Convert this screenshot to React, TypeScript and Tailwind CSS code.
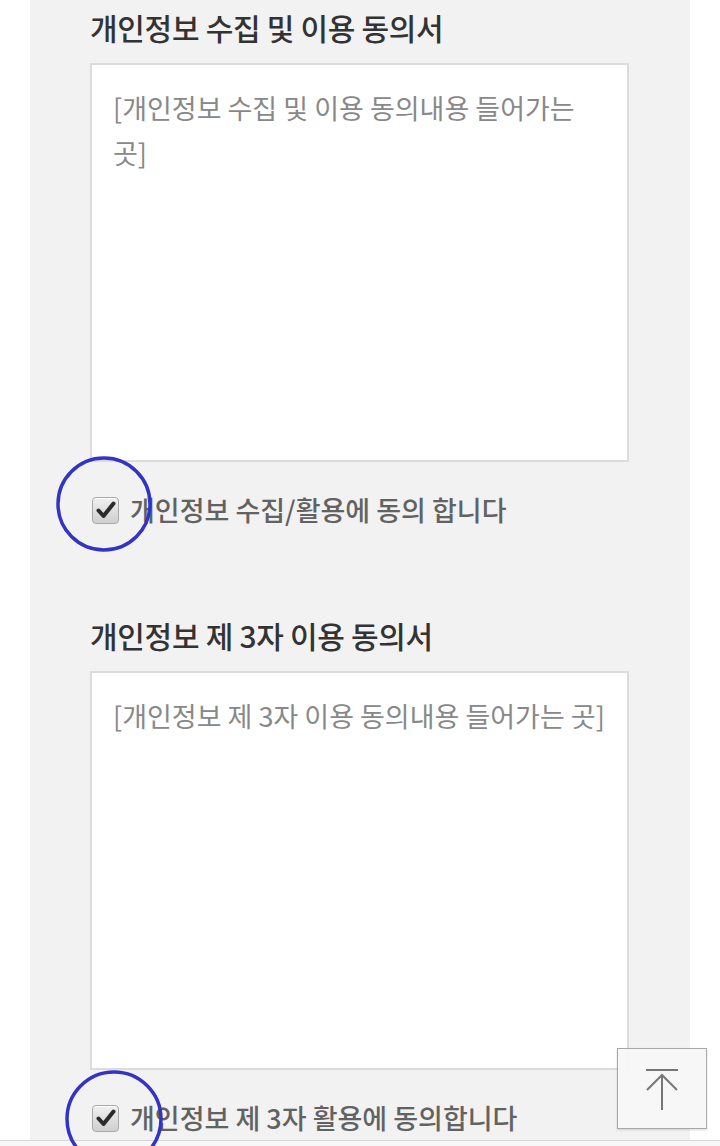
import React from "react";

const KR = { fontFamily: '"Noto Sans CJK KR", "Noto Sans", sans-serif' };

function Check() {
  return (
    <span className="relative flex h-[27px] w-[27px] shrink-0 items-center justify-center rounded-[4px] border border-[#a9a9a9] bg-gradient-to-b from-[#f0f0f0] to-[#cfcfcf] shadow-[inset_0_1px_0_#fff]">
      <svg width="20" height="18" viewBox="0 0 20 18">
        <path d="M2.5 9.5 L7.5 15 L17.5 2.5" fill="none" stroke="#2b2b2b" strokeWidth="4" strokeLinejoin="round" strokeLinecap="round" />
      </svg>
    </span>
  );
}

function Ring({ dx, dy, r }: { dx: number; dy: number; r: number }) {
  return (
    <svg
      className="pointer-events-none absolute"
      width={r * 2 + 8}
      height={r * 2 + 8}
      style={{ left: 13.5 + dx - r - 4, top: 13.5 + dy - r - 4 }}
    >
      <ellipse cx={r + 4} cy={r + 4} rx={r} ry={r} fill="none" stroke="#3434c4" strokeWidth="3.5" />
    </svg>
  );
}

function Section({
  title,
  body,
  label,
  ring,
}: {
  title: string;
  body: string;
  label: string;
  ring: { dx: number; dy: number; r: number };
}) {
  return (
    <div className="flex flex-col">
      <h2 className="text-[30px] leading-[40px] font-medium tracking-[-0.3px] text-[#333]">{title}</h2>
      <div className="mt-4 h-[399px] w-[539px] border-2 border-[#dcdcdc] bg-white pl-[21px] pr-[16px] pt-[20px] text-[27px] leading-[45px] font-normal text-[#888]">
        {body}
      </div>
      <div className="mt-[28px] flex h-[40px] items-center">
        <div className="relative ml-[2px]">
          <Check />
          <Ring {...ring} />
        </div>
        <span className="ml-[11px] text-[27px] leading-[40px] font-medium text-[#626262]">{label}</span>
      </div>
    </div>
  );
}

export default function App() {
  return (
    <div className="relative h-[1146px] w-[720px] overflow-hidden bg-white" style={KR}>
      <div className="ml-[30px] h-[1140px] w-[660px] bg-[#f2f2f2] pl-[60px] pt-[7px]">
        <Section
          title="개인정보 수집 및 이용 동의서"
          body="[개인정보 수집 및 이용 동의내용 들어가는 곳]"
          label="개인정보 수집/활용에 동의 합니다"
          ring={{ dx: -2, dy: -6, r: 46 }}
        />
        <div className="h-[85px]" />
        <Section
          title="개인정보 제 3자 이용 동의서"
          body="[개인정보 제 3자 이용 동의내용 들어가는 곳]"
          label="개인정보 제 3자 활용에 동의합니다"
          ring={{ dx: 8, dy: 1, r: 47 }}
        />
      </div>
      <div className="h-[6px] w-full border-t border-[#d8d8d8] bg-[#f7f7f7]" />
      <button className="absolute left-[617px] top-[1048px] flex h-[81px] w-[90px] items-center justify-center border border-[#a8a8a8] bg-[#f7f7f7]/95 shadow-[0_1px_2px_rgba(0,0,0,0.15)]">
        <svg width="36" height="42" viewBox="0 0 36 42">
          <line x1="2" y1="2" x2="34" y2="2" stroke="#777" strokeWidth="2" />
          <line x1="18" y1="7" x2="18" y2="42" stroke="#777" strokeWidth="2" />
          <polyline points="3,22 18,7 33,22" fill="none" stroke="#777" strokeWidth="2" />
        </svg>
      </button>
    </div>
  );
}
